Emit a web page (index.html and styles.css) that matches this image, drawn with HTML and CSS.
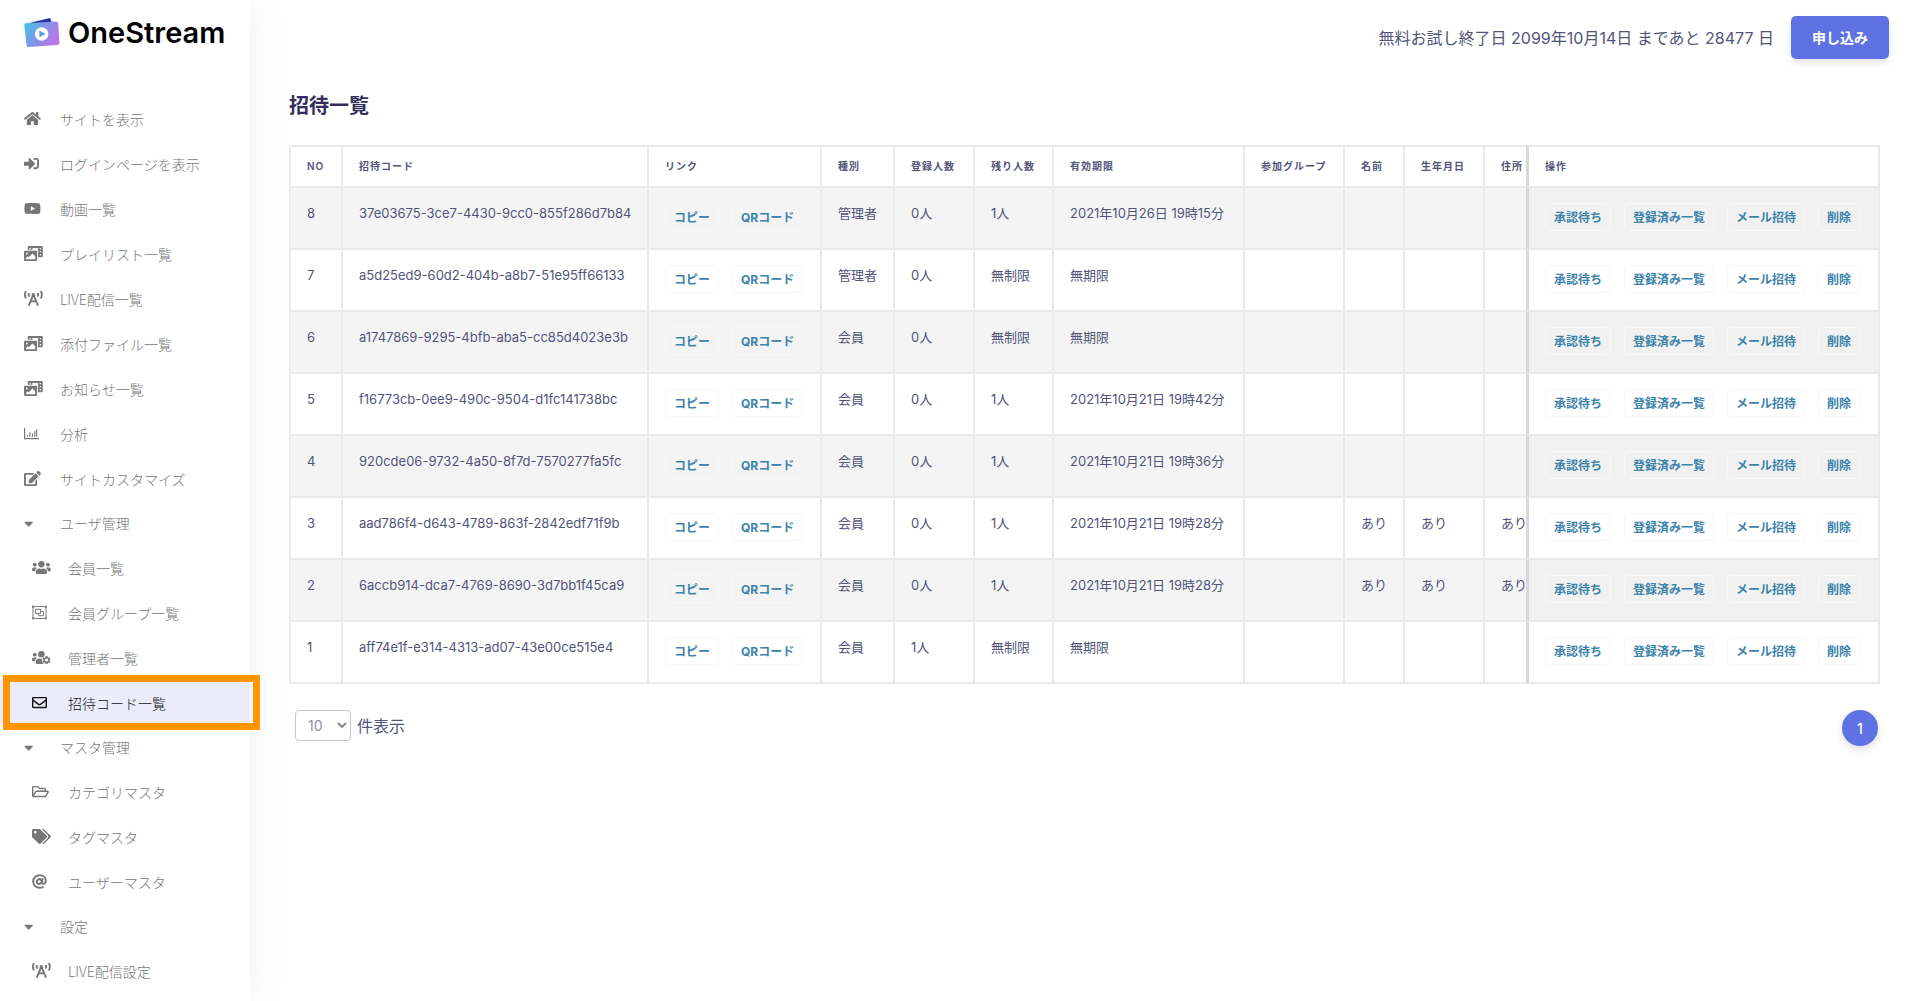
FILE: index.html
```html
<!DOCTYPE html>
<html lang="ja">
<head>
    <meta charset="UTF-8">
    <meta name="viewport" content="width=device-width, initial-scale=1.0">
    <title>招待一覧 | OneStream</title>
    <link rel="stylesheet" href="styles.css">
</head>
<body>
    <!-- icon sprite -->
    <svg class="sprite" aria-hidden="true">
        <symbol id="i-home" viewBox="0 0 576 512" preserveAspectRatio="xMinYMid"><path d="M280.37 148.26L96 300.11V464a16 16 0 0 0 16 16l112.06-.29a16 16 0 0 0 15.92-16V368a16 16 0 0 1 16-16h64a16 16 0 0 1 16 16v95.64a16 16 0 0 0 16 16.05L464 480a16 16 0 0 0 16-16V300L295.67 148.26a12.19 12.19 0 0 0-15.3 0zM571.6 251.47L488 182.56V44.05a12 12 0 0 0-12-12h-56a12 12 0 0 0-12 12v72.61L318.47 43a48 48 0 0 0-61 0L4.34 251.47a12 12 0 0 0-1.6 16.9l25.5 31A12 12 0 0 0 45.15 301l235.22-193.74a12.19 12.19 0 0 1 15.3 0L530.9 301a12 12 0 0 0 16.9-1.6l25.5-31a12 12 0 0 0-1.7-16.93z"/></symbol>
        <symbol id="i-signin" viewBox="0 0 512 512" preserveAspectRatio="xMinYMid"><path d="M416 448h-84c-6.6 0-12-5.4-12-12v-40c0-6.6 5.4-12 12-12h84c17.7 0 32-14.3 32-32V160c0-17.7-14.3-32-32-32h-84c-6.6 0-12-5.4-12-12V76c0-6.6 5.4-12 12-12h84c53 0 96 43 96 96v192c0 53-43 96-96 96zm-47-201L201 79c-15-15-41-4.5-41 17v96H24c-13.3 0-24 10.7-24 24v96c0 13.3 10.7 24 24 24h136v96c0 21.5 26 32 41 17l168-168c9.3-9.4 9.3-24.6 0-34z"/></symbol>
        <symbol id="i-youtube" viewBox="0 0 576 512" preserveAspectRatio="xMinYMid"><path d="M549.655 124.083c-6.281-23.65-24.787-42.276-48.284-48.597C458.781 64 288 64 288 64S117.22 64 74.629 75.486c-23.497 6.322-42.003 24.947-48.284 48.597-11.412 42.867-11.412 132.305-11.412 132.305s0 89.438 11.412 132.305c6.281 23.65 24.787 41.5 48.284 47.821C117.22 448 288 448 288 448s170.78 0 213.371-11.486c23.497-6.321 42.003-24.171 48.284-47.821 11.412-42.867 11.412-132.305 11.412-132.305s0-89.438-11.412-132.305zm-317.51 213.508V175.185l142.739 81.205-142.739 81.201z"/></symbol>
        <symbol id="i-media" viewBox="0 0 640 512" preserveAspectRatio="xMinYMid"><path d="M608 0H160a32 32 0 0 0-32 32v96h160V64h192v320h128a32 32 0 0 0 32-32V32a32 32 0 0 0-32-32zM232 103a9 9 0 0 1-9 9h-30a9 9 0 0 1-9-9V73a9 9 0 0 1 9-9h30a9 9 0 0 1 9 9zm352 208a9 9 0 0 1-9 9h-30a9 9 0 0 1-9-9v-30a9 9 0 0 1 9-9h30a9 9 0 0 1 9 9zm0-104a9 9 0 0 1-9 9h-30a9 9 0 0 1-9-9v-30a9 9 0 0 1 9-9h30a9 9 0 0 1 9 9zm0-104a9 9 0 0 1-9 9h-30a9 9 0 0 1-9-9V73a9 9 0 0 1 9-9h30a9 9 0 0 1 9 9zm-168 57H32a32 32 0 0 0-32 32v288a32 32 0 0 0 32 32h384a32 32 0 0 0 32-32V192a32 32 0 0 0-32-32zM96 224a32 32 0 1 1-32 32 32 32 0 0 1 32-32zm288 224H64v-32l64-64 32 32 128-128 96 96z"/></symbol>
        <symbol id="i-tower" viewBox="0 0 640 512" preserveAspectRatio="xMinYMid"><path d="M150.94 192h33.73c11.01 0 18.61-10.83 14.86-21.18-4.93-13.58-7.55-27.98-7.55-42.82s2.62-29.24 7.55-42.82C203.29 74.83 195.68 64 184.67 64h-33.73c-7.01 0-13.46 4.49-15.41 11.23C130.64 92.21 128 109.88 128 128c0 18.12 2.64 35.79 7.54 52.76 1.94 6.74 8.39 11.24 15.4 11.24zM89.92 23.34C95.56 12.72 87.97 0 75.96 0H40.63c-6.27 0-12.14 3.59-14.74 9.31C9.4 45.54 0 85.65 0 128c0 24.75 3.12 68.33 26.69 118.86 2.62 5.63 8.42 9.14 14.61 9.14h34.84c12.02 0 19.61-12.74 13.95-23.37-49.78-93.32-16.71-178.15-.17-209.29zM614.06 9.29C611.46 3.58 605.6 0 599.33 0h-35.42c-11.98 0-19.66 12.66-14.02 23.25 18.27 34.29 48.42 119.42.28 209.23-5.72 10.68 1.8 23.52 13.91 23.52h35.23c6.27 0 12.13-3.58 14.73-9.29C630.57 210.48 640 170.36 640 128s-9.42-82.48-25.94-118.71zM489.06 64h-33.73c-11.01 0-18.61 10.83-14.86 21.18 4.93 13.58 7.55 27.98 7.55 42.82s-2.62 29.24-7.55 42.82c-3.76 10.35 3.85 21.18 14.86 21.18h33.73c7.02 0 13.46-4.49 15.41-11.24 4.9-16.97 7.53-34.64 7.53-52.76 0-18.12-2.64-35.79-7.54-52.76-1.94-6.75-8.39-11.24-15.4-11.24zm-116.3 100.12c7.05-10.29 11.2-22.71 11.2-36.12 0-35.35-28.63-64-63.96-64-35.32 0-63.96 28.65-63.96 64 0 13.41 4.15 25.83 11.2 36.12l-130.5 313.41c-3.4 8.15.46 17.52 8.61 20.92l29.51 12.31c8.15 3.4 17.52-.46 20.91-8.61L244.96 384h150.07l49.2 118.15c3.4 8.16 12.76 12.01 20.91 8.61l29.51-12.31c8.15-3.4 12-12.77 8.61-20.92l-130.5-313.41zM271.62 320L320 203.81 368.38 320h-96.76z"/></symbol>
        <symbol id="i-chart" viewBox="0 0 512 512" preserveAspectRatio="xMinYMid"><path d="M0 64h40v344h472v40H0zM96 300h38v68H96zM184 212h38v156h-38zM272 256h38v112h-38zM350 168h38v200h-38zM414 112h38v256h-38z"/></symbol>
        <symbol id="i-edit" viewBox="0 0 576 512" preserveAspectRatio="xMinYMid"><path d="M402.6 83.2l90.2 90.2c3.8 3.8 3.8 10 0 13.8L274.4 405.6l-92.8 10.3c-12.4 1.4-22.9-9.1-21.5-21.5l10.3-92.8L388.8 83.2c3.8-3.8 10-3.8 13.8 0zm162-22.9l-48.8-48.8c-15.2-15.2-39.9-15.2-55.2 0l-35.4 35.4c-3.8 3.8-3.8 10 0 13.8l90.2 90.2c3.8 3.8 10 3.8 13.8 0l35.4-35.4c15.2-15.3 15.2-40 0-55.2zM384 346.2V448H64V128h229.8c3.2 0 6.2-1.3 8.5-3.5l40-40c7.6-7.6 2.2-20.5-8.5-20.5H48C21.5 64 0 85.5 0 112v352c0 26.5 21.5 48 48 48h352c26.5 0 48-21.5 48-48V306.2c0-10.7-12.9-16-20.5-8.5l-40 40c-2.2 2.3-3.5 5.3-3.5 8.5z"/></symbol>
        <symbol id="i-caret" viewBox="0 0 320 512" preserveAspectRatio="xMinYMid"><path d="M31.3 192h257.3c17.8 0 26.7 21.5 14.1 34.1L174.1 354.8c-7.8 7.8-20.5 7.8-28.3 0L17.2 226.1C4.6 213.5 13.5 192 31.3 192z"/></symbol>
        <symbol id="i-users" viewBox="0 0 640 512" preserveAspectRatio="xMinYMid"><path d="M96 224c35.3 0 64-28.7 64-64s-28.7-64-64-64-64 28.7-64 64 28.7 64 64 64zm448 0c35.3 0 64-28.7 64-64s-28.7-64-64-64-64 28.7-64 64 28.7 64 64 64zm32 32h-64c-17.6 0-33.5 7.1-45.1 18.6 40.3 22.1 68.9 62 75.1 109.4h66c17.7 0 32-14.3 32-32v-32c0-35.3-28.7-64-64-64zm-256 0c61.9 0 112-50.1 112-112S381.9 32 320 32 208 82.1 208 144s50.1 112 112 112zm76.8 32h-8.3c-20.8 10-43.9 16-68.5 16s-47.6-6-68.5-16h-8.3C179.6 288 128 339.6 128 403.2V432c0 26.5 21.5 48 48 48h288c26.5 0 48-21.5 48-48v-28.8c0-63.6-51.6-115.2-115.2-115.2zm-223.7-13.4C161.5 263.1 145.6 256 128 256H64c-35.3 0-64 28.7-64 64v32c0 17.7 14.3 32 32 32h65.9c6.3-47.4 34.9-87.3 75.2-109.4z"/></symbol>
        <symbol id="i-group" viewBox="0 0 512 512" preserveAspectRatio="xMinYMid"><g fill="none" stroke="currentColor" stroke-width="34"><path d="M78 52h356M78 460h356M34 98v316M478 98v316"/><path d="M17 35h52v50H17zM443 35h52v50h-52zM17 427h52v50H17zM443 427h52v50h-52z"/><path d="M122 146h172v140H122z"/><path d="M294 220h96v146H216v-80"/></g></symbol>
        <symbol id="i-users-cog" viewBox="0 0 640 512" preserveAspectRatio="xMinYMid"><circle cx="96" cy="160" r="64"/><circle cx="320" cy="144" r="112"/><path d="M173 274.600C161.500 263.100 145.600 256 128 256H64c-35.300 0-64 28.700-64 64v32c0 17.700 14.300 32 32 32h66c6.300-47.400 34.900-87.300 75-109.400zM243 288c-63 0-115 52-115 115v29c0 26 22 48 48 48h230c-38-28-60-72-60-120 0-25 6-48 16-68-14 5-28 8-42 8-25 0-48-6-69-12z"/><path fill-rule="evenodd" d="M464 208h64l8 40 24 14 38-14 32 56-31 26v28l31 26-32 56-38-14-24 14-8 40h-64l-8-40-24-14-38 14-32-56 31-26v-28l-31-26 32-56 38 14 24-14zM496 294a50 50 0 1 0 .1 0z"/></symbol>
        <symbol id="i-envelope" viewBox="0 0 512 512" preserveAspectRatio="xMinYMid"><path d="M464 64H48C21.490 64 0 85.490 0 112v288c0 26.510 21.490 48 48 48h416c26.510 0 48-21.490 48-48V112c0-26.510-21.490-48-48-48zm0 48v40.805c-22.422 18.259-58.168 46.651-134.587 106.490-16.841 13.247-50.201 45.072-73.413 44.701-23.208.375-56.579-31.459-73.413-44.701C106.180 199.465 70.425 171.067 48 152.805V112h416zM48 400V214.398c22.914 18.251 55.409 43.862 104.938 82.646 21.857 17.205 60.134 55.186 103.062 54.955 42.717.231 80.509-37.199 103.053-54.947 49.528-38.783 82.032-64.401 104.947-82.653V400H48z"/></symbol>
        <symbol id="i-folder" viewBox="0 0 576 512" preserveAspectRatio="xMinYMid"><path d="M527.9 224H480v-48c0-26.500-21.500-48-48-48H272l-64-64H48C21.500 64 0 85.500 0 112v288c0 26.500 21.500 48 48 48h400c16.500 0 31.900-8.500 40.700-22.600l79.900-128c20-31.900-3-73.400-40.700-73.400zM48 118c0-3.300 2.700-6 6-6h134.100l64 64H426c3.300 0 6 2.700 6 6v42H152c-16.800 0-32.400 8.800-41.100 23.200L48 351.400zm400 282H72l77.200-128H528z"/></symbol>
        <symbol id="i-tags" viewBox="0 0 640 512" preserveAspectRatio="xMinYMid"><path d="M497.941 225.941L286.059 14.059A48 48 0 0 0 252.118 0H48C21.490 0 0 21.490 0 48v204.118a48 48 0 0 0 14.059 33.941l211.882 211.882c18.744 18.745 49.136 18.746 67.882 0l204.118-204.118c18.745-18.745 18.745-49.137 0-67.882zM112 160c-26.510 0-48-21.490-48-48s21.490-48 48-48 48 21.490 48 48-21.490 48-48 48zm513.941 133.823L421.823 497.941c-18.745 18.745-49.137 18.745-67.882 0l-.36-.36L527.640 323.522c16.999-16.999 26.360-39.600 26.360-63.640s-9.362-46.641-26.360-63.640L331.397 0h48.721a48 48 0 0 1 33.941 14.059l211.882 211.882c18.745 18.745 18.745 49.137 0 67.882z"/></symbol>
        <symbol id="i-at" viewBox="0 0 512 512" preserveAspectRatio="xMinYMid"><g fill="none" stroke="currentColor" stroke-width="66"><path d="M392 434C352 460 306 472 256 472 134 472 40 376 40 256S134 40 262 40c118 0 210 76 210 184 0 70-38 112-88 112-34 0-50-20-44-54l28-136"/><ellipse cx="246" cy="258" rx="84" ry="76" transform="rotate(-35 246 258)"/></g></symbol>
    </svg>

    <div class="layout">
        <aside class="sidebar">
            <a class="brand" href="#">
                <svg class="brand-mark" viewBox="0 0 36 30" aria-hidden="true">
                    <defs>
                        <linearGradient id="card" x1="0" y1="0" x2="1" y2=".5">
                            <stop offset="0" stop-color="#36cfe6"/>
                            <stop offset=".5" stop-color="#7f96e8"/>
                            <stop offset="1" stop-color="#b977ea"/>
                        </linearGradient>
                    </defs>
                    <path fill="#29309a" d="M7 4.500 25 .3q1.500-.3 1.800 1.200L28 6 8 8z"/>
                    <path fill="url(#card)" d="M1.800 5.300 32.500 3.500q1.500 0 1.700 1.500L35.500 25q0 1.700-1.600 1.900L4.400 29q-1.600.1-1.800-1.500L.3 7.200q-.1-1.700 1.500-1.900z"/>
                    <circle cx="17.700" cy="16" r="6.700" fill="#fff"/>
                    <path fill="#5e9fe0" d="M15.400 12.400v7.200l6-3.600z"/>
                </svg>
                <span class="brand-name">OneStream</span>
            </a>
            <nav class="menu">
                <a class="menu-item" href="#"><span class="icon"><svg><use href="#i-home"/></svg></span>サイトを表示</a>
                <a class="menu-item" href="#"><span class="icon"><svg><use href="#i-signin"/></svg></span>ログインページを表示</a>
                <a class="menu-item" href="#"><span class="icon"><svg><use href="#i-youtube"/></svg></span>動画一覧</a>
                <a class="menu-item" href="#"><span class="icon"><svg><use href="#i-media"/></svg></span>プレイリスト一覧</a>
                <a class="menu-item" href="#"><span class="icon"><svg><use href="#i-tower"/></svg></span>LIVE配信一覧</a>
                <a class="menu-item" href="#"><span class="icon"><svg><use href="#i-media"/></svg></span>添付ファイル一覧</a>
                <a class="menu-item" href="#"><span class="icon"><svg><use href="#i-media"/></svg></span>お知らせ一覧</a>
                <a class="menu-item" href="#"><span class="icon"><svg><use href="#i-chart"/></svg></span>分析</a>
                <a class="menu-item" href="#"><span class="icon"><svg><use href="#i-edit"/></svg></span>サイトカスタマイズ</a>
                <button class="menu-item menu-toggle" type="button" aria-expanded="true"><span class="icon"><svg><use href="#i-caret"/></svg></span>ユーザ管理</button>
                <div class="submenu">
                    <a class="menu-item" href="#"><span class="icon"><svg><use href="#i-users"/></svg></span>会員一覧</a>
                    <a class="menu-item" href="#"><span class="icon"><svg><use href="#i-group"/></svg></span>会員グループ一覧</a>
                    <a class="menu-item" href="#"><span class="icon"><svg><use href="#i-users-cog"/></svg></span>管理者一覧</a>
                    <a class="menu-item active" href="#" aria-current="page"><span class="icon"><svg><use href="#i-envelope"/></svg></span>招待コード一覧</a>
                </div>
                <button class="menu-item menu-toggle" type="button" aria-expanded="true"><span class="icon"><svg><use href="#i-caret"/></svg></span>マスタ管理</button>
                <div class="submenu">
                    <a class="menu-item" href="#"><span class="icon"><svg><use href="#i-folder"/></svg></span>カテゴリマスタ</a>
                    <a class="menu-item" href="#"><span class="icon"><svg><use href="#i-tags"/></svg></span>タグマスタ</a>
                    <a class="menu-item" href="#"><span class="icon"><svg><use href="#i-at"/></svg></span>ユーザーマスタ</a>
                </div>
                <button class="menu-item menu-toggle" type="button" aria-expanded="true"><span class="icon"><svg><use href="#i-caret"/></svg></span>設定</button>
                <div class="submenu">
                    <a class="menu-item" href="#"><span class="icon"><svg><use href="#i-tower"/></svg></span>LIVE配信設定</a>
                </div>
            </nav>
        </aside>

        <div class="page">
            <header class="topbar">
                <span>無料お試し終了日 2099年10月14日 まであと 28477 日</span>
                <button class="btn-primary" type="button">申し込み</button>
            </header>
            <main class="content">
                <h1 class="title">招待一覧</h1>
                <div class="table-wrap">
                    <table class="table">
                        <colgroup>
                            <col class="c-no"><col class="c-code"><col class="c-link"><col class="c-type"><col class="c-count"><col class="c-rest"><col class="c-limit"><col class="c-group"><col class="c-name"><col class="c-birth"><col class="c-addr"><col class="c-ops">
                        </colgroup>
                        <thead>
                            <tr><th>NO</th><th>招待コード</th><th>リンク</th><th>種別</th><th>登録人数</th><th>残り人数</th><th>有効期限</th><th>参加グループ</th><th>名前</th><th>生年月日</th><th>住所</th><th>操作</th></tr>
                        </thead>
                        <tbody>
                            <tr>
                                <td>8</td><td>37e03675-3ce7-4430-9cc0-855f286d7b84</td>
                                <td><div class="btns"><button type="button">コピー</button><button type="button">QRコード</button></div></td>
                                <td>管理者</td><td>0人</td><td>1人</td><td>2021年10月26日 19時15分</td><td></td><td></td><td></td><td></td>
                                <td><div class="btns"><button type="button">承認待ち</button><button type="button">登録済み一覧</button><button type="button">メール招待</button><button type="button">削除</button></div></td>
                            </tr>
                            <tr>
                                <td>7</td><td>a5d25ed9-60d2-404b-a8b7-51e95ff66133</td>
                                <td><div class="btns"><button type="button">コピー</button><button type="button">QRコード</button></div></td>
                                <td>管理者</td><td>0人</td><td>無制限</td><td>無期限</td><td></td><td></td><td></td><td></td>
                                <td><div class="btns"><button type="button">承認待ち</button><button type="button">登録済み一覧</button><button type="button">メール招待</button><button type="button">削除</button></div></td>
                            </tr>
                            <tr>
                                <td>6</td><td>a1747869-9295-4bfb-aba5-cc85d4023e3b</td>
                                <td><div class="btns"><button type="button">コピー</button><button type="button">QRコード</button></div></td>
                                <td>会員</td><td>0人</td><td>無制限</td><td>無期限</td><td></td><td></td><td></td><td></td>
                                <td><div class="btns"><button type="button">承認待ち</button><button type="button">登録済み一覧</button><button type="button">メール招待</button><button type="button">削除</button></div></td>
                            </tr>
                            <tr>
                                <td>5</td><td>f16773cb-0ee9-490c-9504-d1fc141738bc</td>
                                <td><div class="btns"><button type="button">コピー</button><button type="button">QRコード</button></div></td>
                                <td>会員</td><td>0人</td><td>1人</td><td>2021年10月21日 19時42分</td><td></td><td></td><td></td><td></td>
                                <td><div class="btns"><button type="button">承認待ち</button><button type="button">登録済み一覧</button><button type="button">メール招待</button><button type="button">削除</button></div></td>
                            </tr>
                            <tr>
                                <td>4</td><td>920cde06-9732-4a50-8f7d-7570277fa5fc</td>
                                <td><div class="btns"><button type="button">コピー</button><button type="button">QRコード</button></div></td>
                                <td>会員</td><td>0人</td><td>1人</td><td>2021年10月21日 19時36分</td><td></td><td></td><td></td><td></td>
                                <td><div class="btns"><button type="button">承認待ち</button><button type="button">登録済み一覧</button><button type="button">メール招待</button><button type="button">削除</button></div></td>
                            </tr>
                            <tr>
                                <td>3</td><td>aad786f4-d643-4789-863f-2842edf71f9b</td>
                                <td><div class="btns"><button type="button">コピー</button><button type="button">QRコード</button></div></td>
                                <td>会員</td><td>0人</td><td>1人</td><td>2021年10月21日 19時28分</td><td></td><td>あり</td><td>あり</td><td>あり</td>
                                <td><div class="btns"><button type="button">承認待ち</button><button type="button">登録済み一覧</button><button type="button">メール招待</button><button type="button">削除</button></div></td>
                            </tr>
                            <tr>
                                <td>2</td><td>6accb914-dca7-4769-8690-3d7bb1f45ca9</td>
                                <td><div class="btns"><button type="button">コピー</button><button type="button">QRコード</button></div></td>
                                <td>会員</td><td>0人</td><td>1人</td><td>2021年10月21日 19時28分</td><td></td><td>あり</td><td>あり</td><td>あり</td>
                                <td><div class="btns"><button type="button">承認待ち</button><button type="button">登録済み一覧</button><button type="button">メール招待</button><button type="button">削除</button></div></td>
                            </tr>
                            <tr>
                                <td>1</td><td>aff74e1f-e314-4313-ad07-43e00ce515e4</td>
                                <td><div class="btns"><button type="button">コピー</button><button type="button">QRコード</button></div></td>
                                <td>会員</td><td>1人</td><td>無制限</td><td>無期限</td><td></td><td></td><td></td><td></td>
                                <td><div class="btns"><button type="button">承認待ち</button><button type="button">登録済み一覧</button><button type="button">メール招待</button><button type="button">削除</button></div></td>
                            </tr>
                        </tbody>
                    </table>
                </div>
                <div class="table-footer">
                    <div class="per-page">
                        <span class="select-wrap">
                            <select id="perPage">
                                <option>10</option>
                                <option>25</option>
                                <option>50</option>
                            </select>
                            <svg class="chevron" viewBox="0 0 10 6" aria-hidden="true"><path d="M1 1l4 4 4-4" fill="none" stroke="currentColor" stroke-width="2"/></svg>
                        </span>
                        <label for="perPage">件表示</label>
                    </div>
                    <a class="page-link" href="#" aria-current="page">1</a>
                </div>
            </main>
        </div>
    </div>
</body>
</html>
```

FILE: styles.css
```css
* {
    box-sizing: border-box;
}
body {
    margin: 0;
    background-color: #fff;
    color: #525479;
    font-family: Inter, "Noto Sans CJK JP", sans-serif;
    font-size: 16px;
    line-height: 24px;
}
a {
    text-decoration: none;
}
button, select {
    font-family: inherit;
}
.sprite {
    display: none;
}
.layout {
    display: flex;
    height: 100vh;
    overflow: hidden;
}

/* sidebar */
.sidebar {
    flex: none;
    width: 250px;
    padding-top: 15px;
    background-color: #fff;
    box-shadow: 0 0 32px rgba(136, 152, 170, 0.15);
}
.brand {
    display: flex;
    align-items: center;
    gap: 8px;
    height: 36px;
    margin-bottom: 45px;
    padding-left: 24px;
    color: #000;
}
.brand-mark {
    width: 36px;
    height: 30px;
}
.brand-name {
    font-size: 29px;
    font-weight: 600;
}
.menu-item {
    display: flex;
    align-items: center;
    position: relative;
    width: 100%;
    height: 45px;
    padding: 0 0 0 24px;
    border: 0;
    background: none;
    color: #777;
    font-family: "Noto Sans CJK JP", sans-serif;
    font-size: 14px;
    font-weight: 300;
    text-align: left;
}
.menu-toggle {
    height: 44px;
}
.submenu .menu-item {
    padding-left: 32px;
}
.icon {
    display: flex;
    flex: none;
    width: 36px;
}
.icon svg {
    width: 20px;
    height: 15px;
    fill: currentColor;
}
.icon use {
    width: 100%;
    height: 100%;
}
.active {
    background-color: #ebebfa;
    color: #111;
}
.active::after {
    content: "";
    position: absolute;
    inset: -5px -10px -5px 3px;
    border: 7px solid #ff9500;
}

/* main column */
.page {
    flex: 1;
    min-width: 0;
}
.topbar {
    display: flex;
    justify-content: flex-end;
    align-items: center;
    gap: 17px;
    padding: 16px 31px;
}
.btn-primary {
    height: 43px;
    padding: 0 21px 2px;
    border: 0;
    border-radius: 5px;
    background-color: #5e72e4;
    box-shadow: 0 4px 6px rgba(50, 50, 93, 0.12);
    color: #fff;
    font-size: 14px;
    font-weight: 700;
}
.content {
    padding: 19px 40px 19px 39px;
}
.title {
    margin: 0 0 27px;
    color: #352f5e;
    font-size: 20px;
    font-weight: 700;
    line-height: 24px;
}
.table-wrap {
    overflow-x: auto;
    scrollbar-width: none;
}
.table {
    width: 1610px;
    border-spacing: 0;
    table-layout: fixed;
    font-size: 13px;
    line-height: 20px;
}
.c-no { width: 54px; }
.c-code { width: 306px; }
.c-link { width: 173px; }
.c-type { width: 73px; }
.c-count { width: 80px; }
.c-rest { width: 79px; }
.c-limit { width: 191px; }
.c-group { width: 100px; }
.c-name { width: 60px; }
.c-birth { width: 80px; }
.c-addr { width: 60px; }
.c-ops { width: 354px; }

.table th, .table td {
    padding: 15px 0 0 16px;
    border-right: 2px solid #e8ebeb;
    border-bottom: 2px solid #e8ebeb;
    background-color: #fff;
    text-align: left;
    vertical-align: top;
    white-space: nowrap;
}
.table th {
    height: 43px;
    padding-top: 0;
    padding-bottom: 2px;
    border-top: 2px solid #e8ebeb;
    font-size: 10px;
    font-weight: 600;
    letter-spacing: 1px;
    vertical-align: middle;
}
.table td {
    height: 62px;
}
.table th:first-child, .table td:first-child {
    border-left: 2px solid #e8ebeb;
}
.table tbody tr:nth-child(odd) td {
    background-color: #f4f4f4;
}
/* the actions column stays in view */
.table th:last-child, .table td:last-child {
    position: sticky;
    right: 0;
    border-left: 3px solid #d8d8d8;
}
.table tbody tr:nth-child(odd) td:last-child {
    background-color: #f1f1f1;
}
.btns {
    display: flex;
    gap: 13px;
}
.btns button {
    height: 28px;
    padding: 0 8px 2px;
    border: 1px solid #f8f8f8;
    border-radius: 4px;
    background: none;
    color: #3d83ab;
    font-size: 12px;
    font-weight: 700;
}

/* footer of the table */
.table-footer {
    display: flex;
    justify-content: space-between;
    padding: 26px 2px 0 6px;
}
.per-page {
    display: flex;
    align-items: center;
    gap: 6px;
    height: 31px;
}
.select-wrap {
    display: flex;
    position: relative;
}
.select-wrap select {
    appearance: none;
    width: 56px;
    height: 31px;
    padding: 0 12px;
    border: 1px solid #c4c8ce;
    border-radius: 4px;
    background-color: #fff;
    color: #8c91a4;
    font-size: 14px;
}
.chevron {
    position: absolute;
    top: 12px;
    right: 4px;
    width: 10px;
    height: 6px;
    color: #8a8a8a;
}
.page-link {
    width: 36px;
    height: 36px;
    border-radius: 50%;
    background-color: #5e72e4;
    box-shadow: 0 4px 8px rgba(50, 50, 93, 0.15);
    color: #fff;
    font-size: 14px;
    font-weight: 500;
    line-height: 38px;
    text-align: center;
}
```
